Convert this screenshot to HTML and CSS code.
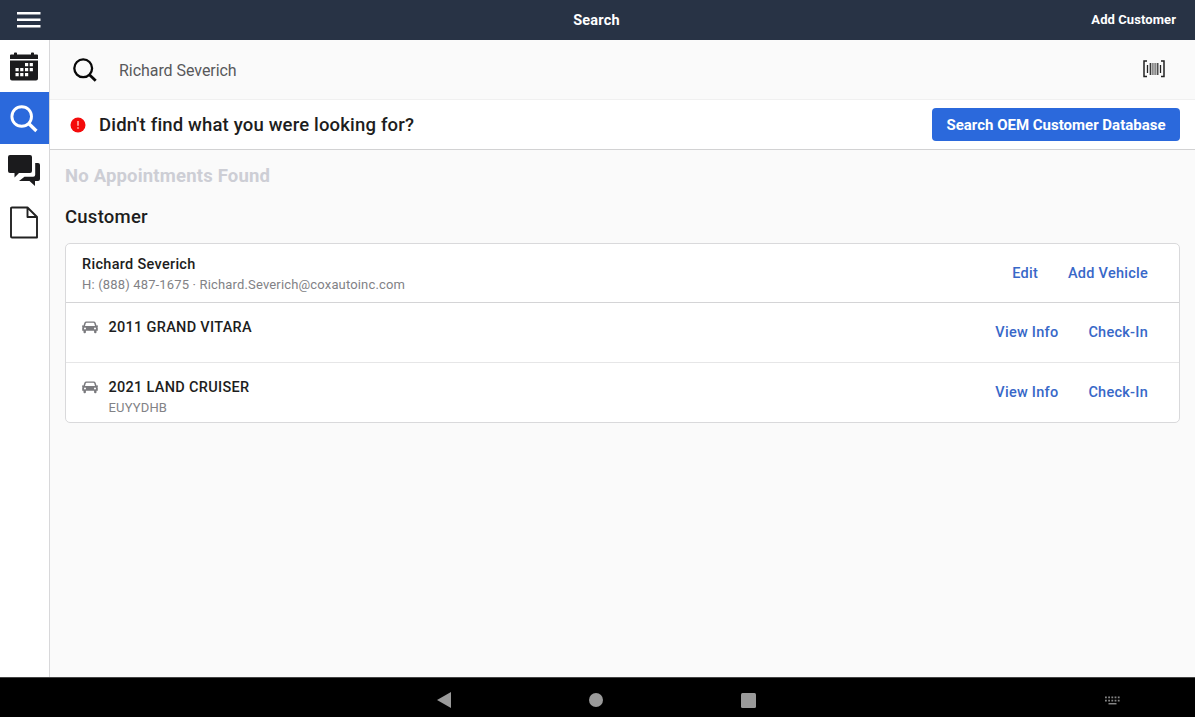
FILE: index.html
```html
<!DOCTYPE html>
<html lang="en">
<head>
<meta charset="utf-8">
<title>Search</title>
<link rel="stylesheet" href="styles.css">
</head>
<body>
<header class="topbar">
  <button class="menu" aria-label="Menu"><svg width="24" height="18" viewBox="0 0 24 18"><path d="M0 2.200h23.500M0 8.700h23.500M0 15.200h23.500" stroke="#fff" stroke-width="2.600"/></svg></button>
  <h1 class="topbar-title">Search</h1>
  <a class="topbar-action">Add Customer</a>
</header>
<div class="body">
  <nav class="rail">
    <a class="rail-item"><svg width="30" height="30" viewBox="0 0 30 30"><path fill="#1b1b1d" d="M2 2.500h3V1.300Q5 .5 5.800.5h1.400Q8 .5 8 1.300V2.500h14V1.300q0-.8.800-.8h1.400q.8 0 .8.800V2.500h3q1 0 1 1V7H1V3.500q0-1 1-1zM1 8.500h28v18q0 2-2 2H3q-2 0-2-2z"/><path fill="#fff" d="M16 11h3.200v3.200H16zM20.700 11h3.200v3.200h-3.200zM6.500 16h3.200v3.200H6.500zM11.200 16h3.200v3.200h-3.200zM16 16h3.200v3.200H16zM20.700 16h3.200v3.200h-3.200zM6.500 21h3.200v3.200H6.500zM11.200 21h3.200v3.200h-3.200zM16 21h3.200v3.200H16z"/></svg></a>
    <a class="rail-item active"><svg width="30" height="30" viewBox="0 0 30 30" fill="none" stroke="#fff"><circle cx="12.700" cy="12.500" r="9.800" stroke-width="2.900"/><path d="M19.700 19.500l7.700 7.500" stroke-width="3.300"/></svg></a>
    <a class="rail-item"><svg width="34" height="32" viewBox="0 0 34 32" fill="#1b1b1d"><path d="M3 0h20q2 0 2 2v14q0 2-2 2H12l-4.500 4.500V18H3q-2 0-2-2V2q0-2 2-2z"/><path d="M28.200 8H31q2 0 2 2v14q0 2-2 2h-3v5l-5.500-5H12l5.500-4.200h8.700q2 0 2-2z"/></svg></a>
    <a class="rail-item"><svg width="30" height="34" viewBox="0 0 30 34" fill="none" stroke="#222" stroke-width="1.900" stroke-linejoin="round"><path d="M3 1.500h15.500L28 11v20.500H3q-1 0-1-1v-28q0-1 1-1zM18.500 1.500V11H28"/></svg></a>
  </nav>
  <main class="content">
    <div class="search-row">
      <svg class="search-icon" width="24" height="24" viewBox="0 0 24 24" fill="none" stroke="#080808"><circle cx="10.200" cy="10.300" r="8.900" stroke-width="2.300"/><path d="M16.700 17l6 5.800" stroke-width="2.800"/></svg>
      <span class="query">Richard Severich</span>
      <svg class="barcode" width="22" height="18" viewBox="0 0 22 18" fill="none" stroke="#222"><path d="M4 1H1v15.500h3M18 1h3v15.500h-3" stroke-width="1.500"/><path d="M4.500 5v8M17.500 5v8" stroke-width="1.300"/><path d="M7.300 3v12M14.800 3v12" stroke-width="1.200"/><path d="M9.200 3v12M11 3v12M12.800 3v12" stroke="#777" stroke-width="1.300"/></svg>
    </div>
    <div class="notice">
      <svg width="16" height="16" viewBox="0 0 16 16"><circle cx="8" cy="8" r="7.500" fill="#f40b0b"/><path d="M8 4v4.800M8 10.300v1.500" stroke="#ffc1b8" stroke-width="1.500"/></svg>
      <span class="notice-text">Didn't find what you were looking for?</span>
      <button class="primary">Search OEM Customer Database</button>
    </div>
    <section class="results">
      <p class="empty">No Appointments Found</p>
      <h2 class="heading">Customer</h2>
      <div class="card">
        <div class="row customer">
          <div class="info"><div class="name">Richard Severich</div><div class="detail contact">H: (888) 487-1675 · Richard.Severich@coxautoinc.com</div></div>
          <a class="link">Edit</a><a class="link">Add Vehicle</a>
        </div>
        <div class="row vehicle">
          <svg class="car" width="16" height="13" viewBox="0 0 16 13"><path fill="#7a7a7e" fill-rule="evenodd" d="M4.300.5h7.400q1.400 0 1.900 1.300L14.500 4.500H16v1.200h-.8q.6.600.6 1.300v2.800h-1.300v1.400q0 1-1 1h-.4q-1 0-1-1V9.800H3.900v1.400q0 1-1 1h-.4q-1 0-1-1V9.800H.2V7q0-.7.600-1.300H0V4.500h1.500l.9-2.700Q2.900.5 4.300.5zM4.500 1.800q-.5 0-.7.500L3 5h10l-.8-2.700q-.2-.5-.7-.5zM3 6.400a1 1 0 100 2 1 1 0 000-2zm10 0a1 1 0 100 2 1 1 0 000-2z"/></svg>
          <div class="info"><div class="name">2011 GRAND VITARA</div></div>
          <a class="link">View Info</a><a class="link">Check-In</a>
        </div>
        <div class="row vehicle">
          <svg class="car" width="16" height="13" viewBox="0 0 16 13"><path fill="#7a7a7e" fill-rule="evenodd" d="M4.300.5h7.400q1.400 0 1.900 1.300L14.500 4.500H16v1.200h-.8q.6.600.6 1.300v2.800h-1.300v1.400q0 1-1 1h-.4q-1 0-1-1V9.800H3.900v1.400q0 1-1 1h-.4q-1 0-1-1V9.800H.2V7q0-.7.600-1.300H0V4.500h1.500l.9-2.700Q2.900.5 4.300.5zM4.500 1.800q-.5 0-.7.500L3 5h10l-.8-2.700q-.2-.5-.7-.5zM3 6.400a1 1 0 100 2 1 1 0 000-2zm10 0a1 1 0 100 2 1 1 0 000-2z"/></svg>
          <div class="info"><div class="name">2021 LAND CRUISER</div><div class="detail">EUYYDHB</div></div>
          <a class="link">View Info</a><a class="link">Check-In</a>
        </div>
      </div>
    </section>
  </main>
</div>
<footer class="android-bar">
  <svg width="14" height="16" viewBox="0 0 14 16"><path fill="#9a9a9a" d="M0 8L14 0v16z"/></svg>
  <svg width="14" height="14" viewBox="0 0 14 14"><circle cx="7" cy="7" r="7" fill="#9a9a9a"/></svg>
  <svg width="15" height="15" viewBox="0 0 15 15"><rect width="15" height="15" rx="1.500" fill="#9a9a9a"/></svg>
  <svg class="keyboard" width="15" height="9" viewBox="0 0 15 9" stroke="#858585"><path stroke-dasharray="1.800 1.400" stroke-width="1.700" d="M0 1.300h15M0 4.600h15"/><path stroke-width="1.500" d="M3.500 7.700h8"/></svg>
</footer>
</body>
</html>
```

FILE: styles.css
```css
* { box-sizing: border-box; margin: 0; padding: 0; }
body { width: 1195px; height: 717px; display: flex; flex-direction: column; overflow: hidden; font-family: Roboto, sans-serif; background: #fafafa; color: #1d1d20; white-space: nowrap; }
svg { display: block; flex: none; }
button { border: 0; background: none; font: inherit; }

.topbar { height: 40px; flex: none; display: grid; grid-template-columns: 1fr auto 1fr; align-items: center; padding: 0 19px 0 17px; background: #283345; color: #fff; }
.menu { justify-self: start; }
.topbar-title { font-size: 14.5px; font-weight: 700; letter-spacing: 0.2px; }
.topbar-action { justify-self: end; padding-bottom: 1px; font-size: 13px; font-weight: 700; letter-spacing: 0.08px; }

.body { flex: 1; display: flex; min-height: 0; }
.rail { width: 50px; flex: none; background: #fff; border-right: 1px solid #d8d8da; }
.rail-item { height: 52px; display: flex; align-items: center; justify-content: center; padding: 1px 2px 0 0; }
.rail-item.active { background: #2b69dc; }
.rail-item:nth-child(n+3) { padding-top: 2px; }
.content { flex: 1; }

.search-row { height: 60px; display: flex; align-items: center; padding: 0 30px 0 23px; border-bottom: 1px solid #f0f0f0; }
.query { flex: 1; margin-left: 22px; padding-top: 2px; font-size: 16px; letter-spacing: -0.05px; color: #58585b; }
.barcode { margin-top: -2px; }
.notice { height: 50px; display: flex; align-items: center; padding: 0 15px 0 20px; background: #fff; border-bottom: 1px solid #d2d2d3; }
.notice-text { flex: 1; margin-left: 13px; font-size: 18.5px; font-weight: 500; letter-spacing: 0.17px; }
.primary { width: 248px; height: 33px; padding-top: 1px; border-radius: 4px; background: #2b69dc; color: #fff; font-size: 15px; font-weight: 700; }

.results { padding: 14px 15px 0; }
.empty { font-size: 18.5px; line-height: 24px; font-weight: 700; letter-spacing: 0.18px; color: #cdced5; }
.heading { margin-top: 17px; font-size: 18.5px; line-height: 24px; font-weight: 500; letter-spacing: 0.25px; }
.card { margin-top: 14px; height: 180px; background: #fff; border: 1px solid #d9d9db; border-radius: 5px; }
.row { display: flex; align-items: center; padding: 0 31px 0 16px; }
.customer { height: 59px; border-bottom: 1px solid #d4d4d6; }
.vehicle { height: 59px; }
.vehicle + .vehicle { height: 60px; border-top: 1px solid #e6e6e7; }
.info { flex: 1; align-self: flex-start; }
.customer .info { padding-top: 11px; }
.vehicle .info { padding-top: 15px; margin-left: 10.5px; }
.name { font-size: 14.5px; line-height: 20px; font-weight: 500; letter-spacing: 0.3px; }
.detail { font-size: 13px; line-height: 20px; letter-spacing: 0.16px; color: #828286; }
.car { align-self: flex-start; margin-top: 18px; }
.link { margin-left: 30px; padding-top: 1px; font-size: 14.5px; font-weight: 500; letter-spacing: 0.26px; color: #3868c8; }
.vehicle .link { padding: 0 0 1px; }

.android-bar { height: 40px; flex: none; position: relative; display: flex; align-items: center; justify-content: center; gap: 138px; padding: 5px 3px 0 0; background: #000; border-top: 1px solid #444; }
.keyboard { position: absolute; right: 75px; top: 18px; }
```
